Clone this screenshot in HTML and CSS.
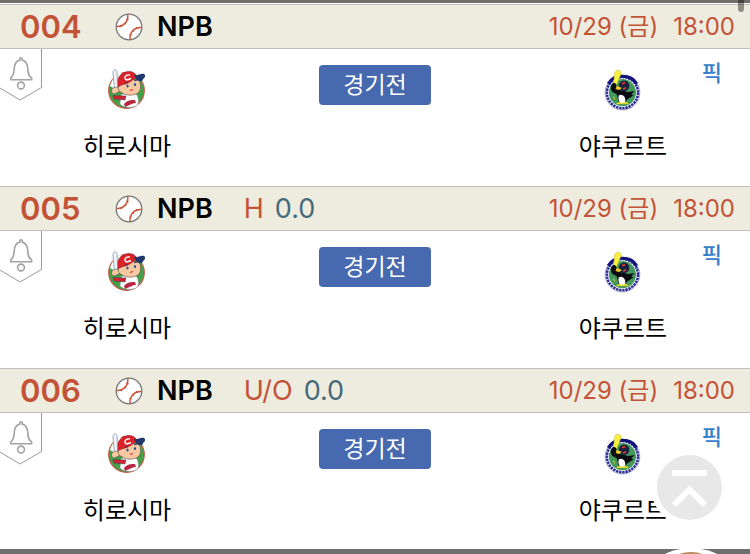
FILE: index.html
```
<!DOCTYPE html>
<html lang="ko">
<head>
    <meta charset="UTF-8">
    <meta name="viewport" content="width=device-width, initial-scale=1.0">
    <title>NPB</title>
    <link rel="stylesheet" href="styles.css">
</head>
<body>
    <svg class="sprite" aria-hidden="true">
        <symbol id="ball" viewBox="0 0 28 28">
            <circle cx="14" cy="14" r="12.8" fill="#fff" stroke="#777" stroke-width="1.3"/>
            <g fill="none" stroke="#c9573c" stroke-width="1.5">
                <path d="M1.600 13.400C8 14 13.500 9 12.800 1.500M15 26.500C14.500 19 19.500 14 26.500 14.500"/>
                <path d="M5.500 12l1 2M9.500 9.500l1.500 1.500M11.500 6l2 .8M14.500 21.500l2 .6M17.300 17.300l1.500 1.500M21.500 14l.8 2"/>
            </g>
        </symbol>
        <symbol id="bell" viewBox="0 0 42 52">
            <path d="M41.500 0V38.500L20 51L0 39" fill="#fff" stroke="#999" stroke-width="1"/>
            <g fill="none" stroke="#a3a3a3" stroke-width="1.6">
                <path d="M10.800 30.800v-2c2.800-1.800 3.200-4.500 3.500-9.500c.3-5 2.500-7.500 5.500-8.200V9.500c0-1 2.400-1 2.400 0v1.600c3 .7 5.200 3.200 5.500 8.200c.3 5 .7 7.700 3.900 9.500v2z"/>
                <circle cx="21" cy="36.500" r="3.400"/>
            </g>
        </symbol>
        <symbol id="carp" viewBox="0 0 38 42">
            <circle cx="18.500" cy="21.500" r="17.800" fill="#43a047" stroke="#cf5548" stroke-width="1.200"/>
            <path d="M2 17C4 10 8 6 13 3l3 6-9 11z" fill="#fff"/>
            <path d="M13 26c5-3 13-3 16 0 2 5 2 9-1 11-5 2-12 2-16-2z" fill="#fff" stroke="#8994a8" stroke-width=".5"/>
            <path d="M16 35c3-4 7-4 11-4l1 3c-3 0-6 2-11 4z" fill="#b92843"/>
            <path d="M5 26.500l13 .5-1 4-11-1z" fill="#d4212c" stroke="#32426d" stroke-width=".5"/>
            <path d="M12 16c4-5 17-8 20-3 1 5 1 8-2 11-5 3-13 3-17-1-4 0-4-5-1-7z" fill="#f7c9a0" stroke="#5a4545" stroke-width=".6"/>
            <path d="M9 18C8 8 14 2.500 21 2.500c4 0 7 2 8 6-5 2-7 6-14 7z" fill="#dc2229" stroke="#872237" stroke-width=".6"/>
            <path d="M26 6c4 1 6-2 10-1 2 1 1 4-1 5 0 3-4 3-7 0z" fill="#20386e"/>
            <path d="M22 6c-5-1-7 4-3 5l4-1.500" fill="none" stroke="#fff" stroke-width="1.400"/>
            <path d="M6.500 20L5 4C5 0 9 0 9 3l.5 16z" fill="#f4f7fb" stroke="#7d94b5" stroke-width=".8"/>
            <path d="M5 19c4-2 6 0 6 4l-5 2c-3-1-3-4-1-6z" fill="#f7c9a0" stroke="#674b48" stroke-width=".6"/>
            <path d="M17 14.500l3-1.500M26 12l3-1" stroke="#26365d" stroke-width=".9"/>
            <ellipse cx="19.500" cy="17" rx="1.100" ry="1.600" fill="#24559a"/>
            <ellipse cx="27" cy="15.500" rx="1.100" ry="1.600" fill="#24559a"/>
            <path d="M22 21.500l3-1" stroke="#cf3038" stroke-width="1.200"/>
        </symbol>
        <symbol id="swallow" viewBox="0 0 36 40">
            <circle cx="17.500" cy="22.500" r="16.500" fill="#fff" stroke="#8f91bd" stroke-width=".8"/>
            <circle cx="17.500" cy="22.500" r="14.800" fill="none" stroke="#2b2d90" stroke-width="2.400" stroke-dasharray="2.300 .7"/>
            <path d="M4 14C9 4.500 26 4.500 31 14" fill="none" stroke="#12127c" stroke-width="3"/>
            <circle cx="17.500" cy="22.500" r="12.900" fill="#43985b"/>
            <path d="M9 14L10 4c1-4 7-4 6 1l-4 10z" fill="#faf13f" stroke="#b8b034" stroke-width=".5"/>
            <path d="M7 15c2-3 5-2 5 2l3 3 8 2 6-1-3 3 2 1-6 4-3 4-5-1-2-8-4-2c-2-2-2-5-1-7z" fill="#0b0c12"/>
            <circle cx="19" cy="16" r="5" fill="#17213f"/>
            <path d="M14 25c4-2 7 2 6 7l-4 1c-2-2-3-5-2-8z" fill="#fff"/>
            <path d="M12 16l5 2-3 2-3-1z" fill="#f5ce2b"/>
            <path d="M17 14l3-1M18 19l3-1" stroke="#e33936" stroke-width="1.600"/>
            <path d="M12 33c2-2 4-1 5 0 2-2 5-1 6 0zM9 26l1 3" fill="#f2dd29" stroke="#f2dd29" stroke-width=".8"/>
        </symbol>
    </svg>

    <div class="top-line"></div>
    <main class="games">
        <article class="game">
            <header class="game-head">
                <strong class="number">004</strong>
                <svg class="ball"><use href="#ball"/></svg>
                <strong class="league">NPB</strong>
                <span class="date">10/29 (금)</span>
                <time class="time">18:00</time>
            </header>
            <div class="game-body">
                <button class="alarm" aria-label="알림"><svg><use href="#bell"/></svg></button>
                <div class="team">
                    <svg class="logo"><use href="#carp"/></svg>
                    <span class="team-name">히로시마</span>
                </div>
                <button class="status">경기전</button>
                <div class="team">
                    <svg class="logo"><use href="#swallow"/></svg>
                    <span class="team-name">야쿠르트</span>
                </div>
                <a class="pick" href="#">픽</a>
            </div>
        </article>

        <article class="game">
            <header class="game-head">
                <strong class="number">005</strong>
                <svg class="ball"><use href="#ball"/></svg>
                <strong class="league">NPB</strong>
                <span class="type">H</span>
                <span class="line">0.0</span>
                <span class="date">10/29 (금)</span>
                <time class="time">18:00</time>
            </header>
            <div class="game-body">
                <button class="alarm" aria-label="알림"><svg><use href="#bell"/></svg></button>
                <div class="team">
                    <svg class="logo"><use href="#carp"/></svg>
                    <span class="team-name">히로시마</span>
                </div>
                <button class="status">경기전</button>
                <div class="team">
                    <svg class="logo"><use href="#swallow"/></svg>
                    <span class="team-name">야쿠르트</span>
                </div>
                <a class="pick" href="#">픽</a>
            </div>
        </article>

        <article class="game">
            <header class="game-head">
                <strong class="number">006</strong>
                <svg class="ball"><use href="#ball"/></svg>
                <strong class="league">NPB</strong>
                <span class="type">U/O</span>
                <span class="line">0.0</span>
                <span class="date">10/29 (금)</span>
                <time class="time">18:00</time>
            </header>
            <div class="game-body">
                <button class="alarm" aria-label="알림"><svg><use href="#bell"/></svg></button>
                <div class="team">
                    <svg class="logo"><use href="#carp"/></svg>
                    <span class="team-name">히로시마</span>
                </div>
                <button class="status">경기전</button>
                <div class="team">
                    <svg class="logo"><use href="#swallow"/></svg>
                    <span class="team-name">야쿠르트</span>
                </div>
                <a class="pick" href="#">픽</a>
            </div>
        </article>
    </main>

    <div class="scroll-thumb"></div>
    <button class="to-top" aria-label="맨 위로">
        <svg viewBox="0 0 65 65">
            <path d="M15 18H50M17 50L32.500 34.500L48 50" fill="none" stroke="#fff" stroke-width="6"/>
        </svg>
    </button>
    <div class="bottom-bar">
        <svg class="bottom-badge" viewBox="0 0 60 6">
            <circle cx="30" cy="60" r="60" fill="#fff"/>
            <circle cx="30" cy="40" r="36" fill="#b98a5c"/>
        </svg>
    </div>
</body>
</html>
```
FILE: styles.css
```
body {
    margin: 0;
    background: white;
    color: black;
    font-family: Inter, "Noto Sans CJK KR", sans-serif;
    overflow: hidden;
}
button {
    padding: 0;
    border: none;
    font-family: inherit;
    cursor: pointer;
}
svg {
    display: block;
}
.sprite {
    position: absolute;
    width: 0;
    height: 0;
}
.top-line {
    height: 3px;
    margin-bottom: 1px;
    background: #6e6e6e;
}
.game-head {
    display: flex;
    align-items: center;
    height: 43px;
    padding: 0 15px 0 20px;
    border-top: 1px solid #bfbfbf;
    border-bottom: 1px solid #bfbfbf;
    background: #eeecdf;
    line-height: 43px;
    white-space: nowrap;
}
.number {
    width: 62px;
    font-size: 31px;
    font-weight: 600;
    color: #c35337;
}
.ball {
    width: 28px;
    height: 28px;
    margin: 0 14px 0 33px;
}
.league {
    font-size: 27px;
    font-weight: 600;
}
.type {
    margin-left: 31px;
    font-size: 27px;
    color: #c35337;
}
.line {
    margin-left: 11px;
    font-size: 27px;
    color: #456a7b;
}
.date, .time {
    font-size: 24px;
    color: #c35337;
}
.date {
    margin-left: auto;
}
.time {
    margin-left: 15px;
}
.game-body {
    position: relative;
    display: grid;
    grid-template-columns: 1fr 1fr 1fr;
    justify-items: center;
    align-items: start;
    padding: 16px 3px 22px;
}
.alarm {
    position: absolute;
    top: 0;
    left: 0;
    background: none;
}
.alarm svg {
    width: 42px;
    height: 52px;
}
.team {
    display: flex;
    flex-direction: column;
    align-items: center;
    gap: 19px;
    padding-top: 4px;
}
.logo {
    width: 38px;
    height: 42px;
}
.team-name {
    font-size: 24px;
    line-height: 34px;
}
.status {
    width: 112px;
    height: 40px;
    border-radius: 4px;
    background: #4769b0;
    color: white;
    font-size: 23px;
    line-height: 40px;
}
.pick {
    position: absolute;
    top: 8px;
    right: 28px;
    font-size: 22px;
    font-weight: 500;
    line-height: 32px;
    color: #3680cc;
    text-decoration: none;
}
.scroll-thumb {
    position: fixed;
    top: 0;
    right: 6px;
    width: 6px;
    height: 12px;
    border-radius: 0 0 3px 3px;
    background: rgba(0, 0, 0, 0.4);
}
.to-top {
    position: fixed;
    right: 28px;
    bottom: 34px;
    width: 65px;
    height: 65px;
    border-radius: 50%;
    background: #e8e8e8;
    box-shadow: 0 0 0 6px white;
}
.bottom-bar {
    position: fixed;
    left: 0;
    right: 0;
    bottom: 0;
    display: flex;
    align-items: flex-end;
    justify-content: flex-end;
    height: 5px;
    background: #6e6e6e;
}
.bottom-badge {
    width: 60px;
    height: 6px;
    margin-right: 29px;
}
```
